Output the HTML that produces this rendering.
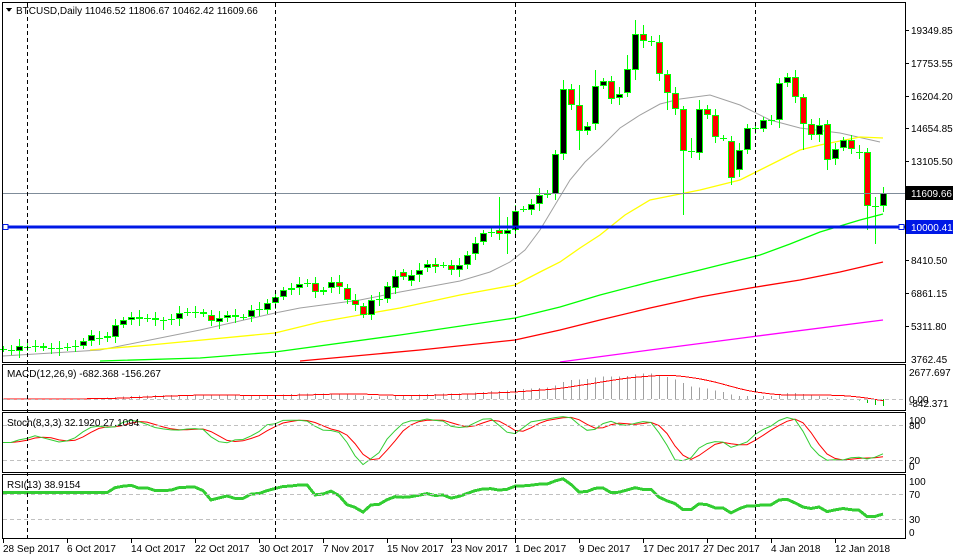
<!DOCTYPE html>
<html><head><meta charset="utf-8">
<style>
body{margin:0;background:#fff;width:953px;height:559px;overflow:hidden;font-family:"Liberation Sans",sans-serif}
svg{display:block}
text{font-family:"Liberation Sans",sans-serif;font-size:10px;fill:#000}
</style></head><body>
<svg id="s" width="953" height="559" xmlns="http://www.w3.org/2000/svg" shape-rendering="crispEdges">
<rect width="953" height="559" fill="#fff"/>
<g id="dyn"></g>
<g fill="none" stroke="#000" stroke-width="1">
<rect x="2.5" y="2.5" width="903" height="360"/>
<rect x="2.5" y="364.5" width="903" height="46"/>
<rect x="2.5" y="412.5" width="903" height="60"/>
<rect x="2.5" y="474.5" width="903" height="64"/>
</g>
<line x1="3" y1="193.5" x2="905" y2="193.5" stroke="#7f8c99" stroke-width="1"/>
<line x1="5" y1="227" x2="905" y2="227" stroke="#0018e6" stroke-width="3"/>
<rect x="3" y="224.5" width="5" height="5" fill="#fff" stroke="#0018e6"/>
<rect x="899" y="224.5" width="5" height="5" fill="#fff" stroke="#0018e6"/>
<g stroke="#c0c0c0" stroke-dasharray="4,3">
<line x1="3" y1="399.5" x2="905" y2="399.5"/>
<line x1="3" y1="425.5" x2="905" y2="425.5"/>
<line x1="3" y1="460.5" x2="905" y2="460.5"/>
<line x1="3" y1="494.5" x2="905" y2="494.5"/>
<line x1="3" y1="519.5" x2="905" y2="519.5"/>
</g>
<g stroke="#000" stroke-dasharray="4,3">
<line x1="27.5" y1="3" x2="27.5" y2="538"/>
<line x1="275.5" y1="3" x2="275.5" y2="538"/>
<line x1="515.5" y1="3" x2="515.5" y2="538"/>
<line x1="755.5" y1="3" x2="755.5" y2="538"/>
</g>
<g>
<text x="911" y="34">19349.85</text>
<text x="911" y="67">17753.55</text>
<text x="911" y="100">16204.20</text>
<text x="911" y="132">14654.85</text>
<text x="911" y="165">13105.50</text>
<text x="911" y="264">8410.50</text>
<text x="911" y="297">6861.15</text>
<text x="911" y="330">5311.80</text>
<text x="911" y="363">3762.45</text>
</g>
<g stroke="#000"><line x1="905" y1="30.5" x2="909" y2="30.5"/><line x1="905" y1="63.5" x2="909" y2="63.5"/><line x1="905" y1="96.5" x2="909" y2="96.5"/><line x1="905" y1="128.5" x2="909" y2="128.5"/><line x1="905" y1="161.5" x2="909" y2="161.5"/><line x1="905" y1="260.5" x2="909" y2="260.5"/><line x1="905" y1="293.5" x2="909" y2="293.5"/><line x1="905" y1="326.5" x2="909" y2="326.5"/></g>
<rect x="906" y="186" width="47" height="14" fill="#000"/>
<text x="911" y="197" style="fill:#fff">11609.66</text>
<rect x="906" y="220" width="47" height="14" fill="#0018e6"/>
<text x="911" y="231" style="fill:#fff">10000.41</text>
<text x="909" y="376">2677.697</text>
<text x="909" y="403">0.00</text>
<text x="909" y="407">-842.371</text>
<text x="909" y="424">100</text>
<text x="909" y="429">80</text>
<text x="909" y="464">20</text>
<text x="909" y="470">0</text>
<text x="909" y="485">100</text>
<text x="909" y="498">70</text>
<text x="909" y="523">30</text>
<text x="909" y="536">0</text>
<path d="M6 8 L12 8 L9 12 Z" fill="#000"/>
<text x="16" y="14">BTCUSD,Daily  11046.52 11806.67 10462.42 11609.66</text>
<text x="7" y="377">MACD(12,26,9) -682.368 -156.267</text>
<text x="7" y="426">Stoch(8,3,3) 32.1920 27.1094</text>
<text x="7" y="488">RSI(13) 38.9154</text>
<g stroke="#000">
<line x1="3.5" y1="539" x2="3.5" y2="543"/><line x1="67.5" y1="539" x2="67.5" y2="543"/><line x1="131.5" y1="539" x2="131.5" y2="543"/><line x1="195.5" y1="539" x2="195.5" y2="543"/><line x1="259.5" y1="539" x2="259.5" y2="543"/><line x1="323.5" y1="539" x2="323.5" y2="543"/><line x1="387.5" y1="539" x2="387.5" y2="543"/><line x1="451.5" y1="539" x2="451.5" y2="543"/><line x1="515.5" y1="539" x2="515.5" y2="543"/><line x1="579.5" y1="539" x2="579.5" y2="543"/><line x1="643.5" y1="539" x2="643.5" y2="543"/><line x1="707.5" y1="539" x2="707.5" y2="543"/><line x1="771.5" y1="539" x2="771.5" y2="543"/><line x1="835.5" y1="539" x2="835.5" y2="543"/>
</g>
<g>
<text x="3" y="552">28 Sep 2017</text><text x="67" y="552">6 Oct 2017</text><text x="131" y="552">14 Oct 2017</text><text x="195" y="552">22 Oct 2017</text><text x="259" y="552">30 Oct 2017</text><text x="323" y="552">7 Nov 2017</text><text x="387" y="552">15 Nov 2017</text><text x="451" y="552">23 Nov 2017</text><text x="515" y="552">1 Dec 2017</text><text x="579" y="552">9 Dec 2017</text><text x="643" y="552">17 Dec 2017</text><text x="703" y="552">27 Dec 2017</text><text x="771" y="552">4 Jan 2018</text><text x="835" y="552">12 Jan 2018</text>
</g>
</svg>
<script>
(function(){
var C=[[349,349,1],[350,350,1],[346,351,1],[347,347,1],[346,346,1],[346,348,0],[348,349,0],[348,349,1],[347,347,1],[346,346,1],[341,346,1],[335,341,1],[338,338,1],[336,338,1],[325,337,1],[320,325,1],[317,320,1],[317,319,0],[318,318,1],[318,320,0],[320,320,1],[319,320,1],[313,319,1],[312,312,1],[312,312,1],[312,314,0],[315,321,0],[318,322,1],[315,318,1],[315,317,0],[317,317,1],[310,317,1],[309,309,1],[303,310,1],[297,303,1],[290,297,1],[288,290,1],[284,288,1],[283,283,1],[283,292,0],[290,292,1],[282,288,1],[282,287,0],[288,300,0],[300,305,0],[306,315,0],[300,315,1],[299,299,1],[286,299,1],[276,288,1],[272,277,0],[275,281,1],[270,275,1],[264,268,1],[264,267,0],[265,265,1],[265,270,0],[265,270,1],[255,265,1],[243,254,1],[233,242,1],[232,232,1],[230,234,0],[230,234,1],[211,230,1],[209,209,1],[204,210,1],[195,204,1],[194,194,1],[154,194,1],[89,154,1],[89,105,0],[105,131,0],[126,131,1],[86,124,1],[81,86,1],[81,99,0],[94,98,1],[69,93,1],[34,70,1],[34,41,0],[41,41,1],[42,74,0],[74,93,0],[93,109,0],[109,151,0],[151,151,1],[109,153,1],[109,115,0],[115,137,0],[138,138,1],[141,178,0],[150,170,1],[128,150,1],[128,128,1],[120,129,1],[120,120,1],[83,120,1],[77,83,1],[77,97,0],[97,124,0],[124,135,0],[125,135,1],[124,160,0],[149,159,1],[140,148,1],[140,149,0],[152,152,1],[152,206,0],[206,206,1],[193,206,1]];
var OV={20:[0,330],62:[197,240],63:[217,254],69:[150,200],70:[80,160],72:[85,150],74:[70,0],78:[55,0],79:[20,80],80:[25,48],83:[0,110],85:[0,215],86:[138,158],87:[100,0],91:[0,185],97:[78,128],99:[70,0],100:[0,150],103:[0,170],108:[0,230],109:[197,244],110:[187,212]};
var P=function(y){return 19349.85-(y-30)/0.021107;};
var n=C.length,hi=[],lo=[],cl=[],out=[];
function X(i){return 3+8*i;}
function pl(pts,col,w){out.push('<polyline fill="none" stroke="'+col+'" stroke-width="'+w+'" points="'+pts+'" shape-rendering="auto"/>');}
pl("3,356 100,350 150,340 200,330 275,313 300,308 360,300 400,292 460,281 490,272 510,262 525,250 540,230 555,205 570,180 585,162 600,148 620,128 640,115 660,104 680,99 710,95 740,105 770,120 800,128 840,133 880,142","#a0a0a0",1);
pl("90,350 150,345 275,333 320,322 400,308 460,295 515,285 540,272 560,262 580,248 600,235 625,215 650,200 700,190 740,180 760,170 780,160 800,150 820,145 860,137 883,138","#ffff00",1.3);
pl("100,361 200,358 275,352 400,335 515,318 560,307 600,295 650,282 700,270 760,255 790,244 820,232 860,220 883,214","#00ff00",1.3);
pl("300,361 420,350 515,340 560,330 600,320 650,308 700,297 750,288 800,280 840,272 883,262","#ff0000",1.3);
pl("560,362 650,350 750,337 883,320","#ff00ff",1.3);
for(var i=0;i<n;i++){
 var t=C[i][0],b=C[i][1],up=C[i][2],w=3+(i*7%5);
 var h=t-w,l=b+w;
 if(OV[i]){if(OV[i][0])h=OV[i][0];if(OV[i][1])l=OV[i][1];}
 var x=X(i);
 hi.push(P(h));lo.push(P(l));cl.push(P(up?t:b));
 out.push('<line x1="'+(x+.5)+'" y1="'+h+'" x2="'+(x+.5)+'" y2="'+l+'" stroke="#00ff00"/>');
 if(b-t<2){out.push('<line x1="'+(x-3)+'" y1="'+(t+.5)+'" x2="'+(x+4)+'" y2="'+(t+.5)+'" stroke="#00ff00"/>');}
 else out.push('<rect x="'+(x-2.5)+'" y="'+(t+.5)+'" width="6" height="'+(b-t-1)+'" fill="'+(up?'#000':'#ff0000')+'" stroke="#00ff00"/>');
}
function ema(a,p){var k=2/(p+1),r=[a[0]];for(var i=1;i<a.length;i++)r.push(a[i]*k+r[i-1]*(1-k));return r;}
var e12=ema(cl,12),e26=ema(cl,26),m=[],sg=[];
for(i=0;i<n;i++)m.push(e12[i]-e26[i]);
for(i=0;i<n;i++){var s=0,c=0;for(var j=Math.max(0,i-8);j<=i;j++){s+=m[j];c++;}sg.push(s/c);}
var sc=(399-372)/2677.7;
var sp=[];
for(i=0;i<n;i++){var x=X(i)+.5,y=399-m[i]*sc;y=Math.max(366,Math.min(409,y));
 out.push('<line x1="'+x+'" y1="399" x2="'+x+'" y2="'+y.toFixed(1)+'" stroke="'+(m[i]<0?'#00c000':'#a0a0a0')+'"/>');
 sp.push(x+','+Math.max(366,Math.min(409,399-sg[i]*sc)).toFixed(1));}
out.push('<polyline fill="none" stroke="#ff0000" points="'+sp.join(' ')+'"/>');
var raw=[],K=[],D=[];
for(i=0;i<n;i++){var H=-1e9,L=1e9;for(j=Math.max(0,i-7);j<=i;j++){H=Math.max(H,hi[j]);L=Math.min(L,lo[j]);}raw.push(H>L?100*(cl[i]-L)/(H-L):50);}
function sma(a,p){var r=[];for(var i=0;i<a.length;i++){var s=0,c=0;for(var j=Math.max(0,i-p+1);j<=i;j++){s+=a[j];c++;}r.push(s/c);}return r;}
K=sma(raw,3);D=sma(K,3);
var sy=function(v){return (472-v*0.59).toFixed(1);};
var kp=[],dp=[];for(i=0;i<n;i++){kp.push(X(i)+','+sy(K[i]));dp.push(X(i)+','+sy(D[i]));}
out.push('<polyline fill="none" stroke="#ff0000" points="'+dp.join(' ')+'" shape-rendering="auto"/>');
out.push('<polyline fill="none" stroke="#32cd32" points="'+kp.join(' ')+'" shape-rendering="auto"/>');
var g=0,lz=0,p=13,R=[];
for(i=1;i<=p;i++){var d=cl[i]-cl[i-1];if(d>0)g+=d;else lz-=d;}g/=p;lz/=p;
for(i=0;i<n;i++){if(i>p){var d=cl[i]-cl[i-1];g=(g*(p-1)+(d>0?d:0))/p;lz=(lz*(p-1)+(d<0?-d:0))/p;}
 var r=lz==0?100:100-100/(1+g/lz);R.push(r);}
var rp=[];for(i=0;i<n;i++)rp.push(X(i)+','+(538-R[i]*0.625).toFixed(1));
out.push('<polyline fill="none" stroke="#32cd32" stroke-width="3" points="'+rp.join(' ')+'"/>');
document.getElementById('dyn').innerHTML=out.join('');
})();
</script>
</body></html>
